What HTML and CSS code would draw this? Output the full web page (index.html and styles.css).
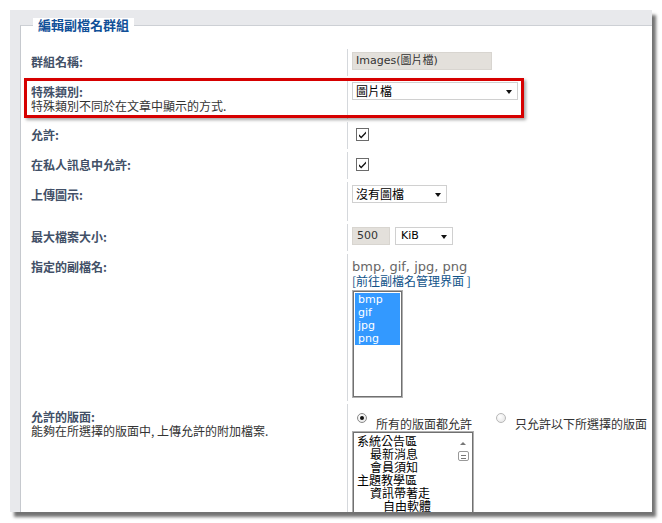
FILE: index.html
```html
<!DOCTYPE html>
<html lang="zh-Hant">
<head>
  <meta charset="UTF-8">
  <title>編輯副檔名群組</title>
  <link rel="stylesheet" href="styles.css">
</head>
<body>
  <div class="frame">
    <fieldset class="panel">
      <legend>編輯副檔名群組</legend>

      <dl class="row">
        <dt><label class="title">群組名稱:</label></dt>
        <dd><span class="field field-name">Images(圖片檔)</span></dd>
      </dl>

      <dl class="row row-marked">
        <dt>
          <label class="title">特殊類別:</label>
          <span class="explain">特殊類別不同於在文章中顯示的方式.</span>
        </dt>
        <dd><span class="select select-type">圖片檔</span></dd>
        <div class="marker"></div>
      </dl>

      <dl class="row">
        <dt><label class="title">允許:</label></dt>
        <dd>
          <svg class="check" width="13" height="13" viewBox="0 0 13 13">
            <rect x="0.5" y="0.5" width="12" height="12" fill="#fff" stroke="#6b6b6b"/>
            <path d="M3 6.2 L5.2 8.6 L10 3.6 L10 5.6 L5.2 10.6 L3 8.2 Z" fill="#111"/>
          </svg>
        </dd>
      </dl>

      <dl class="row">
        <dt><label class="title">在私人訊息中允許:</label></dt>
        <dd>
          <svg class="check" width="13" height="13" viewBox="0 0 13 13">
            <rect x="0.5" y="0.5" width="12" height="12" fill="#fff" stroke="#6b6b6b"/>
            <path d="M3 6.2 L5.2 8.6 L10 3.6 L10 5.6 L5.2 10.6 L3 8.2 Z" fill="#111"/>
          </svg>
        </dd>
      </dl>

      <dl class="row">
        <dt><label class="title">上傳圖示:</label></dt>
        <dd>
          <span class="select select-icon">沒有圖檔</span>
          <div class="icon-preview"></div>
        </dd>
      </dl>

      <dl class="row">
        <dt><label class="title">最大檔案大小:</label></dt>
        <dd class="size-fields">
          <span class="field field-size">500</span>
          <span class="select select-unit latin">KiB</span>
        </dd>
      </dl>

      <dl class="row row-exts">
        <dt><label class="title">指定的副檔名:</label></dt>
        <dd>
          <div class="ext-list">bmp, gif, jpg, png</div>
          <a class="manage-link" href="#">[前往副檔名管理界面 ]</a>
          <div class="listbox ext-box">
            <div class="opt sel">bmp</div>
            <div class="opt sel">gif</div>
            <div class="opt sel">jpg</div>
            <div class="opt sel">png</div>
          </div>
        </dd>
      </dl>

      <dl class="row row-forums">
        <dt>
          <label class="title">允許的版面:</label>
          <span class="explain">能夠在所選擇的版面中, 上傳允許的附加檔案.</span>
        </dt>
        <dd>
          <div class="radio-line">
            <span class="radio checked"></span>
            <span class="radio-text">所有的版面都允許</span>
            <span class="radio radio-second"></span>
            <span class="radio-text">只允許以下所選擇的版面</span>
          </div>
          <div class="listbox forum-box">
            <div class="forum-opts">
              <div class="lvl0">系統公告區</div>
              <div class="lvl1">最新消息</div>
              <div class="lvl1">會員須知</div>
              <div class="lvl0">主題教學區</div>
              <div class="lvl1">資訊帶著走</div>
              <div class="lvl2">自由軟體</div>
            </div>
            <div class="scrollbar">
              <span class="scroll-up"></span>
              <span class="scroll-thumb"></span>
            </div>
          </div>
        </dd>
      </dl>
    </fieldset>
  </div>
</body>
</html>
```

FILE: styles.css
```css
body {
  margin: 0;
  background: #fff;
  font-family: "Noto Sans CJK TC", sans-serif;
  font-size: 12px;
  color: #333;
}

.frame {
  margin: 10px;
  width: 642px;
  height: 502px;
  background: #e8e9ec;
  box-shadow: 4px 5px 3px rgba(0,0,0,0.55);
  overflow: hidden;
}

.panel {
  margin: 8px 0 0 10px;
  padding: 17px 0 0 10px;
  min-width: 0;
  height: 600px;
  border: 0;
  border-top: 1px solid #cdd0d5;
  border-left: 1px solid #c6c9ce;
  background: #fff;
}

legend {
  margin-left: 2px;
  padding: 0 5px;
  background: #fff;
  color: #115098;
  font-weight: bold;
  font-size: 13px;
  line-height: 14px;
}

.row {
  display: flex;
  margin: 0 0 3px;
  position: relative;
}

.row dt {
  width: 316px;
  padding: 6px 0;
  line-height: 14px;
}

.row dd {
  margin: 0;
  padding: 3px 0 6px 4px;
  border-left: 1px solid #d5d8dc;
  line-height: 14px;
}

.title {
  font-weight: bold;
  color: #425067;
}

.explain {
  display: block;
  color: #333;
}

/* red frame drawn over the special category row */
.marker {
  position: absolute;
  left: -7px;
  top: -1px;
  width: 500px;
  height: 40px;
  box-sizing: border-box;
  border: 3px solid #d60000;
  box-shadow: 2px 2px 3px rgba(0,0,0,0.35);
  pointer-events: none;
}

.field {
  display: inline-block;
  height: 18px;
  box-sizing: border-box;
  padding: 0 3px;
  border: 1px solid #d8d5d0;
  background: #e3e0db;
  font-family: "DejaVu Sans", "Noto Sans CJK TC", sans-serif;
  font-size: 11px;
  line-height: 16px;
  color: #333;
  vertical-align: top;
}

.field-name {
  width: 140px;
}

.field-size {
  width: 38px;
  padding-left: 4px;
}

.select {
  display: inline-flex;
  align-items: center;
  justify-content: space-between;
  height: 18px;
  box-sizing: border-box;
  padding: 0 5px 0 3px;
  border: 1px solid #d0d0d0;
  background: #fff;
  color: #000;
  font-size: 12px;
  line-height: 16px;
  vertical-align: top;
}

.select::after {
  content: "";
  border-left: 3px solid transparent;
  border-right: 3px solid transparent;
  border-top: 4px solid #111;
  margin-top: 1px;
}

.select.latin {
  font-family: "DejaVu Sans", sans-serif;
  font-size: 11px;
  padding-left: 5px;
}

.select-type {
  width: 166px;
}

.select-icon {
  width: 95px;
}

.select-unit {
  width: 58px;
  margin-left: 5px;
}

.size-fields {
  display: flex;
  align-items: flex-start;
}

.icon-preview {
  height: 12px;
}

.check {
  display: block;
  margin: 3px 0 2px 4px;
}

.row-exts dd {
  padding-top: 6px;
  padding-bottom: 3px;
}

.ext-list {
  color: #666;
  font-family: "DejaVu Sans", sans-serif;
  font-size: 13px;
  line-height: 14px;
}

.manage-link {
  display: block;
  color: #105289;
  text-decoration: none;
  line-height: 14px;
}

.listbox {
  box-sizing: border-box;
  border: 1px solid #b0b0b0;
  box-shadow: inset 0 0 0 1px #707070;
  background: #fff;
}

.ext-box {
  margin-top: 2px;
  width: 51px;
  height: 108px;
  padding: 2px;
  font-family: "DejaVu Sans", sans-serif;
  font-size: 11px;
  line-height: 13px;
}

.opt {
  padding-left: 3px;
  color: #000;
}

.opt.sel {
  background: #3399ff;
  color: #fff;
}

.radio-line {
  display: flex;
  align-items: flex-start;
  height: 17px;
  margin-top: 6px;
  padding-left: 5px;
  color: #333;
}

.radio {
  width: 10px;
  height: 10px;
  box-sizing: border-box;
  border: 1px solid #b8b8b8;
  border-radius: 50%;
  background: radial-gradient(circle at 35% 35%, #fff, #e2e2e2);
  margin-right: 9px;
  position: relative;
}

.radio.checked {
  border-color: #8a8a8a;
}

.radio.checked::after {
  content: "";
  position: absolute;
  left: 2px;
  top: 2px;
  width: 4px;
  height: 4px;
  border-radius: 50%;
  background: #111;
}

.radio-second {
  margin-left: 24px;
}

.radio-text {
  padding-top: 4px;
  line-height: 14px;
}

.forum-box {
  display: flex;
  margin-top: 1px;
  width: 122px;
  height: 120px;
  padding: 2px;
  font-size: 12px;
  line-height: 13px;
  color: #000;
}

.forum-opts {
  flex: 1;
}

.lvl0 {
  padding-left: 2px;
}

.lvl1 {
  padding-left: 15px;
}

.lvl2 {
  padding-left: 28px;
}

.scrollbar {
  width: 16px;
  display: flex;
  flex-direction: column;
  align-items: center;
  padding-top: 8px;
}

.scroll-up {
  border-left: 3px solid transparent;
  border-right: 3px solid transparent;
  border-bottom: 3px solid #777;
}

.scroll-thumb {
  margin-top: 6px;
  width: 11px;
  height: 10px;
  box-sizing: border-box;
  border: 1px solid #999;
  border-radius: 2px;
  background: repeating-linear-gradient(#fff 0 2px, #777 2px 3px);
  background-size: 5px 7px;
  background-position: center 1px;
  background-repeat: no-repeat;
}
```
